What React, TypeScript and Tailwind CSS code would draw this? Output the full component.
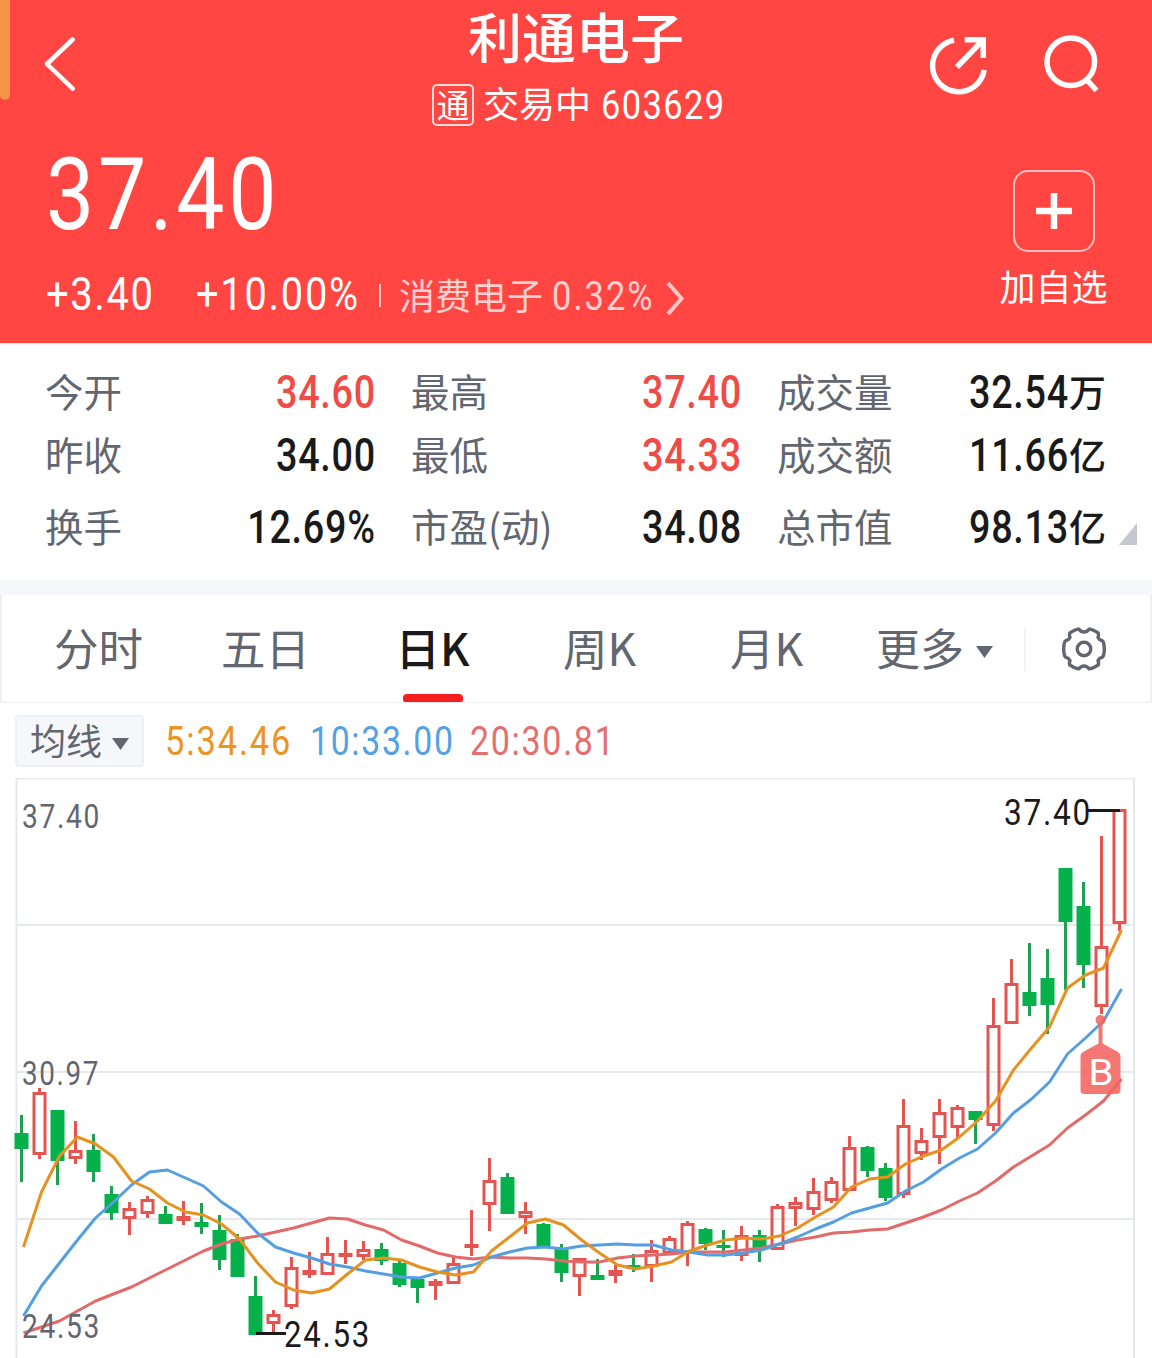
import { clsx } from "clsx";
import type { ReactNode } from "react";

interface Quote {
    label: string;
    value: string;
    unit?: string;
    up?: boolean;
}

const quotes: Quote[][] = [
    [{ label: "今开", value: "34.60", up: true }, { label: "最高", value: "37.40", up: true }, { label: "成交量", value: "32.54", unit: "万" }],
    [{ label: "昨收", value: "34.00" }, { label: "最低", value: "34.33", up: true }, { label: "成交额", value: "11.66", unit: "亿" }],
    [{ label: "换手", value: "12.69%" }, { label: "市盈(动)", value: "34.08" }, { label: "总市值", value: "98.13", unit: "亿" }],
];

const tabs = ["分时", "五日", "日K", "周K", "月K"];

// up?, high, body top, body bottom, low (chart y)
const candles: [number, number, number, number, number][] = [
    [0, 1115, 1133, 1149, 1182], [1, 1088, 1092, 1155, 1159], [0, 1110, 1110, 1161, 1185], [1, 1121, 1150, 1159, 1164],
    [0, 1134, 1150, 1172, 1182], [0, 1186, 1194, 1213, 1220], [1, 1202, 1208, 1219, 1235], [1, 1196, 1199, 1214, 1218],
    [0, 1206, 1214, 1224, 1224], [1, 1201, 1216, 1221, 1225], [0, 1203, 1222, 1227, 1234], [0, 1215, 1230, 1260, 1270],
    [0, 1234, 1239, 1277, 1277], [0, 1276, 1296, 1335, 1335], [1, 1310, 1314, 1324, 1333], [1, 1257, 1267, 1307, 1309],
    [1, 1252, 1270, 1275, 1278], [1, 1237, 1253, 1275, 1275], [1, 1240, 1253, 1257, 1264], [1, 1241, 1249, 1257, 1260],
    [0, 1243, 1249, 1261, 1265], [0, 1261, 1263, 1285, 1287], [0, 1277, 1279, 1288, 1303], [1, 1279, 1281, 1286, 1300],
    [1, 1257, 1263, 1284, 1284], [1, 1210, 1244, 1248, 1256], [1, 1158, 1180, 1205, 1231], [0, 1173, 1177, 1214, 1214],
    [1, 1202, 1211, 1218, 1234], [0, 1223, 1224, 1246, 1247], [0, 1244, 1249, 1273, 1282], [1, 1258, 1258, 1277, 1296],
    [0, 1259, 1275, 1280, 1280], [1, 1265, 1270, 1276, 1283], [0, 1254, 1265, 1269, 1272], [1, 1240, 1250, 1267, 1282],
    [1, 1236, 1238, 1254, 1254], [1, 1221, 1223, 1253, 1266], [0, 1228, 1229, 1244, 1250], [0, 1230, 1245, 1248, 1257],
    [1, 1226, 1235, 1256, 1261], [0, 1230, 1235, 1249, 1262], [1, 1204, 1206, 1250, 1250], [1, 1197, 1202, 1209, 1226],
    [1, 1178, 1191, 1210, 1215], [1, 1177, 1181, 1201, 1203], [1, 1136, 1147, 1191, 1191], [0, 1146, 1147, 1171, 1177],
    [0, 1163, 1168, 1198, 1201], [1, 1099, 1125, 1195, 1198], [1, 1128, 1140, 1154, 1160], [1, 1099, 1112, 1138, 1164],
    [1, 1105, 1107, 1128, 1138], [0, 1111, 1111, 1120, 1144], [1, 998, 1025, 1126, 1131], [1, 959, 983, 1024, 1024],
    [0, 943, 992, 1006, 1016], [0, 949, 978, 1005, 1034], [0, 868, 868, 922, 990], [0, 882, 906, 965, 988],
    [1, 836, 946, 1007, 1014], [1, 809, 809, 924, 931],
];

const ma5 = [
    1247, 1192, 1156, 1137, 1144, 1157, 1181, 1189, 1203, 1212, 1215, 1224, 1239, 1263, 1282, 1290, 1293, 1289, 1274, 1260, 1258,
    1260, 1267, 1272, 1275, 1272, 1251, 1237, 1223, 1219, 1225, 1240, 1253, 1265, 1269, 1266, 1262, 1251, 1245, 1240, 1238,
    1239, 1236, 1228, 1217, 1207, 1187, 1179, 1177, 1164, 1156, 1150, 1137, 1121, 1101, 1070, 1048, 1027, 988, 975, 968, 930,
];
const ma10 = [
    1316, 1286, 1263, 1240, 1218, 1202, 1185, 1172, 1170, 1178, 1186, 1202, 1214, 1233, 1247, 1253, 1258, 1264, 1267, 1271, 1274,
    1277, 1278, 1273, 1268, 1265, 1257, 1252, 1248, 1247, 1249, 1246, 1245, 1244, 1245, 1245, 1250, 1252, 1255, 1255, 1253,
    1250, 1244, 1237, 1229, 1222, 1213, 1208, 1203, 1191, 1182, 1169, 1158, 1149, 1133, 1113, 1099, 1082, 1054, 1038, 1021, 989,
];
const ma20 = [
    1333, 1327, 1321, 1311, 1301, 1294, 1287, 1278, 1269, 1260, 1251, 1244, 1239, 1236, 1232, 1228, 1223, 1218, 1219, 1225, 1230,
    1240, 1246, 1253, 1257, 1259, 1257, 1258, 1258, 1259, 1261, 1262, 1262, 1258, 1256, 1255, 1254, 1252, 1252, 1252, 1250,
    1248, 1244, 1240, 1237, 1233, 1232, 1230, 1229, 1223, 1217, 1210, 1201, 1193, 1181, 1167, 1156, 1145, 1128, 1115, 1101, 1079,
];

const toPoints = (ys: number[]) => ys.map((y, i) => `${23.5 + i * 18},${y}`).join(" ");

// narrow digits
function Num({ children, className }: { children: ReactNode; className?: string }) {
    return <span className={clsx("inline-block whitespace-nowrap font-[Roboto,sans-serif]", className)}>{children}</span>;
}

function Header() {
    return (
        <header className="relative h-[343px] bg-[#ff4642] text-white">
            <div className="absolute left-0 top-0 h-[100px] w-[10px] rounded-b-[5px] bg-[#f39449]" />
            <div className="flex h-[140px] justify-between">
                <div className="w-[240px] pl-[40px] pt-[34px]">
                    <svg width="40" height="60" viewBox="40 34 40 60" fill="none" stroke="#fff" strokeWidth="4.5" strokeLinecap="round" strokeLinejoin="round">
                        <path d="M72.700 39.500 L47 64 L72.700 88.700" />
                    </svg>
                </div>
                <div className="flex w-[400px] flex-col items-center">
                    <h1 className="h-[75px] font-[Roboto,'Noto_Sans_CJK_SC',sans-serif] text-[54px] font-medium leading-[82px]">利通电子</h1>
                    <div className="flex h-[60px] w-[288px] items-center">
                        <span className="flex h-[42px] w-[42px] shrink-0 items-center justify-center rounded-[5px] border-2 border-white/80 pb-[1px] text-[33px] leading-none">通</span>
                        <span className="ml-[9px] w-[118px] shrink-0 pb-[5px] text-[36px] leading-[55px]">交易中</span>
                        <Num className="origin-left scale-x-[0.84] pb-[1px] text-[41px] leading-[60px] tracking-[0.04em]">603629</Num>
                    </div>
                </div>
                <div className="w-[240px] pt-[30px]">
                    <svg width="240" height="70" viewBox="912 30 240 70" fill="none" stroke="#fff" strokeWidth="5.5">
                        <path d="M954 40.200 A26 26 0 1 0 984.200 70" />
                        <path d="M957 67 L982 41" />
                        <path d="M964.700 39.800 H983.200 V58" />
                        <circle cx="1070.8" cy="61.8" r="23.8" />
                        <path d="M1086 79 L1096.500 90.500" />
                    </svg>
                </div>
            </div>
            <div className="flex justify-between">
                <div className="pl-[46px]">
                    <Num className="block h-[110px] origin-left scale-x-[0.85] text-[101px] leading-[110px] tracking-[0.043em]">37.40</Num>
                    <div className="flex h-[90px] items-center">
                        <Num className="w-[150px] origin-left scale-x-[0.85] pb-[1px] text-[47px] tracking-[0.04em]">+3.40</Num>
                        <Num className="w-[183px] origin-left scale-x-[0.845] pb-[1px] text-[47px] tracking-[0.045em]">+10.00%</Num>
                        <span className="h-[23px] w-[2px] bg-white/70" />
                        <span className="ml-[18px] w-[153px] pb-[3px] text-[36px] text-white/75">消费电子</span>
                        <Num className="w-[114px] origin-left scale-x-[0.86] pt-[3px] text-[40px] tracking-[0.06em] text-white/75">0.32%</Num>
                        <svg className="mt-[3px]" width="20" height="36" viewBox="0 0 20 36" fill="none" stroke="#fff" strokeOpacity=".7" strokeWidth="4">
                            <path d="M2 4 L15.500 19.500 L2 35" />
                        </svg>
                    </div>
                </div>
                <div className="flex w-[197px] flex-col items-center pt-[30px]">
                    <div className="flex h-[82px] w-[82px] items-center justify-center rounded-[15px] border-2 border-white/65">
                        <svg width="36" height="36" viewBox="0 0 36 36" stroke="#fff" strokeWidth="6.5">
                            <path d="M0 18 H36 M18 0 V36" />
                        </svg>
                    </div>
                    <span className="text-[36px] leading-[67px]">加自选</span>
                </div>
            </div>
        </header>
    );
}

function QuoteTable() {
    return (
        <section className="flex h-[237px] flex-col border-t border-[#ffdedd] pt-[16px]">
            {quotes.map((row, r) => (
                <div key={r} className={clsx("relative flex items-center pl-[45px]", r === 2 ? "h-[81px]" : "h-[63px]")}>
                    {row.map((q, i) => (
                        <div key={q.label} className={clsx("flex items-center justify-between", i === 2 ? "w-[329px]" : "mr-[35px] w-[331px]")}>
                            <span className="pb-[4px] text-[38.5px] leading-[56px] text-[#626670]">{q.label}</span>
                            <span className={clsx("flex items-center font-medium", q.up ? "text-[#f04b47]" : "text-[#1a1a1a]")}>
                                <Num className="origin-right scale-x-[0.82] text-[46px] leading-[60px] tracking-[0.02em]">{q.value}</Num>
                                {q.unit && <span className="pb-[2px] text-[37px] leading-[58px]">{q.unit}</span>}
                            </span>
                        </div>
                    ))}
                    {r === 2 && (
                        <svg className="absolute left-[1119px] top-[37px]" width="18" height="22" viewBox="0 0 18 22">
                            <path d="M18 0 V22 H0 Z" fill="#c5c8cf" />
                        </svg>
                    )}
                </div>
            ))}
        </section>
    );
}

function Tabs() {
    return (
        <nav className="flex h-[108px] items-center border-x-2 border-b border-[#edeff3] pl-[13px]">
            {tabs.map((t) => (
                <div key={t} className={clsx("relative flex h-full w-[167px] items-center justify-center pb-[3px] text-[44.5px]", t === "日K" ? "font-medium text-[#1a1a1a]" : "text-[#626670]")}>
                    {t}
                    {t === "日K" && <span className="absolute bottom-0 left-[54px] h-[8px] w-[60px] rounded-t-[4px] rounded-b-[2px] bg-[#f71e20]" />}
                </div>
            ))}
            <div className="ml-[26px] flex items-center pb-[4px] text-[44px] text-[#626670]">
                更多
                <svg className="ml-[12px] mt-[11px]" width="17" height="12" viewBox="0 0 17 12">
                    <path d="M0 0 H17 L8.500 12 Z" fill="#626670" />
                </svg>
            </div>
            <span className="ml-[31px] h-[44px] w-[2px] bg-[#f3f4f6]" />
            <svg className="ml-[34px]" width="48" height="48" viewBox="-24 -24 48 48" fill="none" stroke="#626670" strokeWidth="3.4" strokeLinejoin="round">
                <path d="M0 -17 Q3 -17 5 -19.800 Q7.500 -20.200 14.200 -16 Q15 -14 14 -11.500 Q15.200 -9 18.500 -8.200 Q20.300 -6 20.300 0 Q20.300 6 18.500 8.200 Q15.200 9 14 11.500 Q15 14 14.200 16 Q7.500 20.200 5 19.800 Q3 17 0 17 Q-3 17 -5 19.800 Q-7.500 20.200 -14.200 16 Q-15 14 -14 11.500 Q-15.200 9 -18.500 8.200 Q-20.300 6 -20.300 0 Q-20.300 -6 -18.500 -8.200 Q-15.200 -9 -14 -11.500 Q-15 -14 -14.200 -16 Q-7.500 -20.200 -5 -19.800 Q-3 -17 0 -17 Z" />
                <circle r="6.8" />
            </svg>
        </nav>
    );
}

function Averages() {
    return (
        <div className="flex h-[75px] items-center pl-[15px]">
            <div className="flex h-[52px] w-[129px] items-center rounded-[4px] border-2 border-[#edf0f4] bg-[#f6f7fa] pb-[4px] pl-[13px] text-[36px] leading-none text-[#626670]">
                均线
                <svg className="ml-[10px] mt-[10px]" width="17" height="12" viewBox="0 0 17 12">
                    <path d="M0 0 H17 L8.500 12 Z" fill="#626670" />
                </svg>
            </div>
            <Num className="ml-[21px] w-[145px] origin-left scale-x-[0.86] pt-[3px] text-[40px] tracking-[0.055em] text-[#ec9423]">5:34.46</Num>
            <Num className="w-[160px] origin-left scale-x-[0.845] pt-[3px] text-[40px] tracking-[0.05em] text-[#54a2e4]">10:33.00</Num>
            <Num className="origin-left scale-x-[0.85] pt-[3px] text-[40px] tracking-[0.05em] text-[#e56e6e]">20:30.81</Num>
        </div>
    );
}

function Chart() {
    return (
        <svg className="block font-[Roboto,sans-serif]" width="1152" height="580" viewBox="0 778 1152 580" fill="none">
            <g stroke="#e5e9eb" strokeWidth="2">
                <path d="M16 778.500 H1135" strokeWidth="1.5" />
                <path d="M16.500 778 V1358 M1134 778 V1358" />
                <path d="M16 925 H1135 M16 1072 H1135 M16 1219 H1135" />
            </g>
            {candles.map(([up, high, top, bottom, low], i) => {
                const x = 21.5 + i * 18;
                return up ? (
                    <g key={i} stroke="#e45450" strokeWidth="3">
                        <path d={`M${x} ${high} V${top + 1} M${x} ${bottom - 1} V${low}`} />
                        <rect x={x - 5.5} y={top + 1.5} width="11" height={Math.max(bottom - top - 3, 1)} />
                    </g>
                ) : (
                    <g key={i}>
                        <path d={`M${x} ${high} V${low}`} stroke="#1fa055" strokeWidth="3" />
                        <rect x={x - 7} y={top} width="14" height={bottom - top} fill="#04b14b" />
                    </g>
                );
            })}
            <g strokeWidth="3" strokeLinejoin="round">
                <polyline points={toPoints(ma20)} stroke="#e26a6a" />
                <polyline points={toPoints(ma10)} stroke="#559fe0" />
                <polyline points={toPoints(ma5)} stroke="#e69220" />
            </g>
            <g fill="#626670" fontSize="34" letterSpacing="2">
                <text x="22" y="827.5" textLength="79" lengthAdjust="spacingAndGlyphs">37.40</text>
                <text x="22" y="1084.5" textLength="78" lengthAdjust="spacingAndGlyphs">30.97</text>
                <text x="22" y="1337.5" textLength="79" lengthAdjust="spacingAndGlyphs">24.53</text>
            </g>
            <path d="M1088 810.500 H1120 M256 1333.500 H286" stroke="#1a1a1a" strokeWidth="3" />
            <g fill="#1a1a1a" fontSize="37" letterSpacing="2">
                <text x="1004" y="824.5" textLength="88" lengthAdjust="spacingAndGlyphs">37.40</text>
                <text x="284" y="1347" textLength="87" lengthAdjust="spacingAndGlyphs">24.53</text>
            </g>
            <g fill="#f4635f" fillOpacity=".87">
                <circle cx="1100.5" cy="1020" r="5" />
                <path d="M1098.500 1024 H1102.500 V1043.500 L1118 1052 Q1120.500 1053.500 1120.500 1056 V1090 Q1120.500 1094 1116.500 1094 H1084.500 Q1080.500 1094 1080.500 1090 V1056 Q1080.500 1053.500 1083 1052 L1098.500 1043.500 Z" />
            </g>
            <text x="1088.5" y="1084.5" fill="#fff" fontSize="36" textLength="25" lengthAdjust="spacingAndGlyphs">B</text>
        </svg>
    );
}

export default function App() {
    return (
        <main className="h-[1358px] w-[1152px] overflow-hidden bg-white font-['Noto_Sans_CJK_SC',sans-serif]">
            <Header />
            <QuoteTable />
            <div className="h-[15px] bg-[#f6f7fa]" />
            <Tabs />
            <Averages />
            <Chart />
        </main>
    );
}
